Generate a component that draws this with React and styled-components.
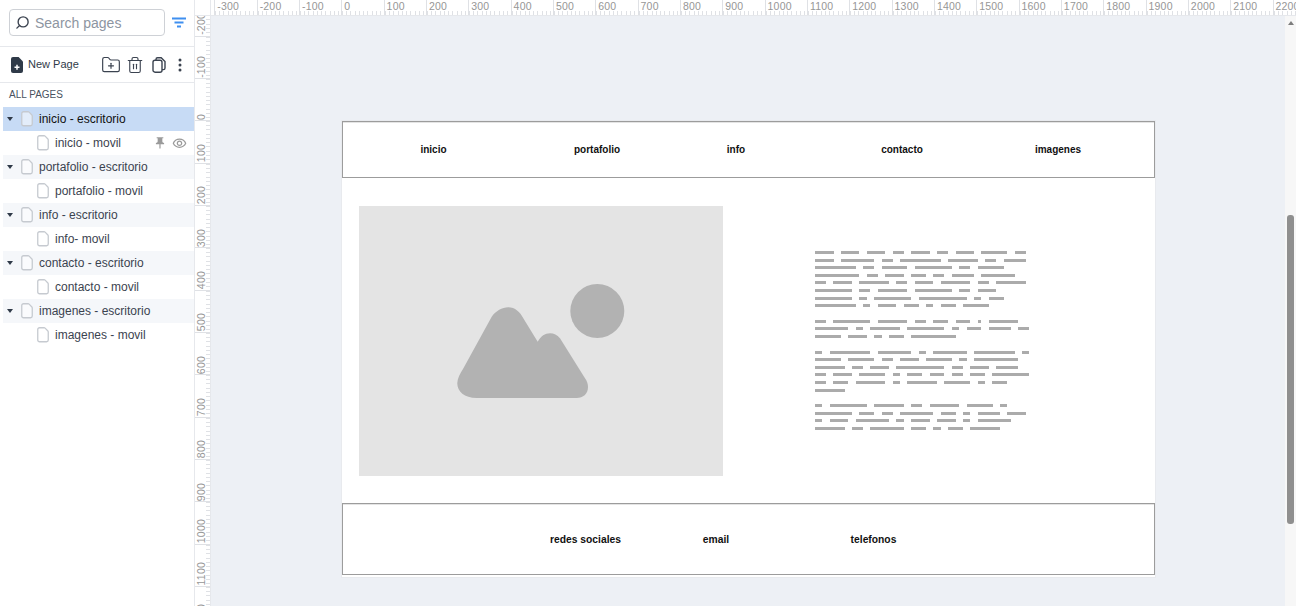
import React from "react";
import styled, { createGlobalStyle } from "styled-components";
import { Search, FolderPlus, Trash2 } from "lucide-react";
import { MdPushPin, MdOutlineVisibility } from "react-icons/md";

const GlobalStyle = createGlobalStyle`
    html, body {
        margin: 0;
        height: 606px;
        overflow: hidden;
        background: #fff;
        font-family: "Liberation Sans", Arial, sans-serif;
    }
    * { box-sizing: border-box; }
`;

const pages = [
    { name: "inicio - escritorio", child: "inicio - movil", selected: true },
    { name: "portafolio - escritorio", child: "portafolio - movil" },
    { name: "info - escritorio", child: "info- movil" },
    { name: "contacto - escritorio", child: "contacto - movil" },
    { name: "imagenes - escritorio", child: "imagenes - movil" },
];

const hLabels = [];
for (let i = -300; i <= 2200; i += 100) hLabels.push(i);
const vLabels = [];
for (let i = -200; i <= 1200; i += 100) vLabels.push(i);

/* largo de cada palabra del texto simulado */
const paragraphs = [
    [
        [5, 5, 5, 3, 5, 3, 5, 7, 3],
        [5, 9, 3, 11, 8, 3, 6],
        [11, 3, 7, 10, 3, 7],
        [12, 3, 5, 4, 3, 6, 9],
        [3, 5, 8, 3, 5, 8, 3, 8],
        [10, 3, 8, 10, 3, 5],
        [10, 2, 10, 13, 2, 4],
        [11, 2, 5, 4, 2, 4, 7],
    ],
    [
        [3, 10, 8, 3, 4, 4, 1, 8],
        [9, 2, 8, 10, 2, 4, 6, 3],
        [7, 5, 2, 4, 12],
    ],
    [
        [2, 11, 9, 2, 9, 11, 2],
        [7, 7, 3, 5, 7, 2, 12],
        [8, 3, 5, 13, 3, 5, 6],
        [3, 5, 7, 2, 4, 4, 3, 4, 10],
        [3, 4, 8, 2, 8, 7, 2, 4],
        [8],
    ],
    [
        [2, 10, 8, 3, 8, 7, 2],
        [10, 4, 3, 9, 4, 2, 6, 5],
        [2, 5, 9, 2, 5, 5, 2, 9],
        [8, 3, 9, 4, 2, 4, 8],
    ],
];

const navLinks = ["inicio", "portafolio", "info", "contacto", "imagenes"];
const footerLinks = ["redes sociales", "email", "telefonos"];

const PageIcon = () => (
    <svg width="12" height="16" viewBox="0 0 12 16" fill="none">
        <path
            d="M2.5 .75h4.6c.4 0 .7.1 1 .4l2.8 2.9c.3.3.35.6.35 1v8c0 1-.7 1.7-1.7 1.7H2.5c-1 0-1.75-.7-1.75-1.7V2.5C.75 1.5 1.5.75 2.5.75z"
            fill="#fff"
            fillOpacity=".5"
            stroke="#c6cad0"
            strokeWidth="1.3"
        />
    </svg>
);

const NewPageIcon = () => (
    <svg width="12" height="16" viewBox="0 0 12 16">
        <path
            d="M2 0h5.6L12 4.4V14a2 2 0 0 1-2 2H2a2 2 0 0 1-2-2V2a2 2 0 0 1 2-2z"
            fill="#2f3a48"
        />
        <path d="M6 7.7v5M3.5 10.2h5" stroke="#fff" strokeWidth="1.5" />
    </svg>
);

const CopyIcon = () => (
    <svg width="14" height="16" viewBox="0 0 14 16" fill="none" stroke="#3b4350" strokeWidth="1.4">
        <path d="M4 3V2.4C4 1.400 4.600.800 5.500.800h3.700l3.800 3.800v6.400c0 1-.6 1.600-1.500 1.600H10" />
        <rect x="1" y="3.300" width="9" height="11.900" rx="2" />
    </svg>
);

const KebabIcon = () => (
    <svg width="4" height="14" viewBox="0 0 4 14" fill="#3b4350">
        <circle cx="2" cy="2" r="1.500" />
        <circle cx="2" cy="7" r="1.500" />
        <circle cx="2" cy="12" r="1.500" />
    </svg>
);

const FilterIcon = () => (
    <svg width="14" height="11" viewBox="0 0 14 11" fill="none" stroke="#3f8ff0" strokeWidth="2">
        <path d="M0 1.500h14M2.500 5.500h9M5 9.500h4" />
    </svg>
);

const PlaceholderArt = () => (
    <svg width="168" height="114" viewBox="0 0 168 114" fill="#b2b2b2">
        <circle cx="140.300" cy="27" r="27" />
        <path d="M19.700 114C7 114 0 107 .3 99C.5 94 3 90 6 85L34.700 32.700C39 27 45 23.300 51.300 23.300C58 23.300 63 28 66.300 34.300L80.700 57.700C84 52 88 49.300 93 49.300C97 49.300 100 51 103 54.300L128 94.300C130 97 131 100 131 103C131 110 126 114 119.700 114Z" />
    </svg>
);

const App = () => {
    return (
        <Layout>
            <GlobalStyle />
            <Sidebar>
                <SearchRow>
                    <SearchBox>
                        <SearchGlyph size={15} strokeWidth={2.2} />
                        <span>Search pages</span>
                    </SearchBox>
                    <FilterIcon />
                </SearchRow>
                <ActionRow>
                    <NewPage>
                        <NewPageIcon />
                        <NewPageLabel>New Page</NewPageLabel>
                    </NewPage>
                    <Actions>
                        <ActionSlot>
                            <FolderPlus size={20} strokeWidth={1.4} color="#3b4350" />
                        </ActionSlot>
                        <ActionSlot>
                            <Trash2 size={18} strokeWidth={1.5} color="#3b4350" />
                        </ActionSlot>
                        <ActionSlot>
                            <CopyIcon />
                        </ActionSlot>
                        <ActionSlot $narrow>
                            <KebabIcon />
                        </ActionSlot>
                    </Actions>
                </ActionRow>
                <SectionTitle>ALL PAGES</SectionTitle>
                {pages.map((page) => (
                    <React.Fragment key={page.name}>
                        <ParentRow $selected={page.selected}>
                            <Caret />
                            <PageIcon />
                            <RowName $dark={page.selected}>{page.name}</RowName>
                        </ParentRow>
                        <ChildRow>
                            <PageIcon />
                            <RowName>{page.child}</RowName>
                            {page.selected && (
                                <RowTools>
                                    <MdPushPin size={14} color="#9a9a9a" />
                                    <MdOutlineVisibility size={15} color="#9a9a9a" />
                                </RowTools>
                            )}
                        </ChildRow>
                    </React.Fragment>
                ))}
            </Sidebar>
            <Workspace>
                <TopRuler>
                    <RulerCorner />
                    <HorizontalScale>
                        {hLabels.map((n) => (
                            <HCell key={n}>{n}</HCell>
                        ))}
                    </HorizontalScale>
                </TopRuler>
                <WorkspaceBody>
                    <LeftRuler>
                        {vLabels.map((n) => (
                            <VCell key={n}>
                                <span>{n}</span>
                            </VCell>
                        ))}
                    </LeftRuler>
                    <Canvas>
                        <Page>
                            <NavBar>
                                {navLinks.map((l) => (
                                    <NavLink key={l}>{l}</NavLink>
                                ))}
                            </NavBar>
                            <Content>
                                <Placeholder>
                                    <PlaceholderArt />
                                </Placeholder>
                                <TextBlock>
                                    {paragraphs.map((lines, i) => (
                                        <Paragraph key={i}>
                                            {lines.map((words, j) => (
                                                <TextLine key={j}>
                                                    {words.map((w, k) => (
                                                        <Word key={k} $chars={w} />
                                                    ))}
                                                </TextLine>
                                            ))}
                                        </Paragraph>
                                    ))}
                                </TextBlock>
                            </Content>
                            <FooterBar>
                                {footerLinks.map((l) => (
                                    <BarLink key={l}>{l}</BarLink>
                                ))}
                            </FooterBar>
                        </Page>
                    </Canvas>
                    <ScrollTrack>
                        <ScrollArrow />
                        <ScrollThumb />
                    </ScrollTrack>
                </WorkspaceBody>
            </Workspace>
        </Layout>
    );
};

const Layout = styled.div`
    display: flex;
    width: 1296px;
    height: 606px;
    overflow: hidden;
`;

/* Sidebar */
const Sidebar = styled.aside`
    flex: 0 0 195px;
    border-right: 1px solid #e6e8ec;
    background: #fff;
`;

const SearchRow = styled.div`
    display: flex;
    align-items: center;
    gap: 7px;
    height: 47px;
    padding: 0 0 1px 9px;
    border-bottom: 1px solid #e6e8ec;
`;

const SearchBox = styled.div`
    display: flex;
    align-items: center;
    gap: 5px;
    width: 156px;
    height: 27px;
    padding-left: 5px;
    border: 1px solid #ced1d6;
    border-radius: 4px;
    color: #8d95a1;
    font-size: 14px;
`;

const SearchGlyph = styled(Search)`
    transform: scaleX(-1);
    color: #3b4350;
`;

const ActionRow = styled.div`
    display: flex;
    align-items: center;
    justify-content: space-between;
    height: 36px;
    padding: 0 5px 0 11px;
    border-bottom: 1px solid #e6e8ec;
`;

const NewPage = styled.div`
    display: flex;
    align-items: center;
    gap: 5px;
    color: #2f3a48;
    font-size: 11px;
`;

const NewPageLabel = styled.span`
    margin-top: -2px;
`;

const Actions = styled.div`
    display: flex;
    align-items: center;
`;

const ActionSlot = styled.div`
    display: flex;
    align-items: center;
    justify-content: center;
    width: ${(p) => (p.$narrow ? "18px" : "24px")};
`;

const SectionTitle = styled.div`
    height: 24px;
    padding: 6px 0 0 9px;
    color: #4a5260;
    font-size: 10px;
    line-height: 12px;
`;

const ParentRow = styled.div`
    display: flex;
    align-items: center;
    height: 24px;
    margin-left: 3px;
    padding-left: 4px;
    background: ${(p) => (p.$selected ? "#c7dbf5" : "#f5f7fa")};
    svg { margin-left: 8px; }
`;

const Caret = styled.span`
    width: 0;
    height: 0;
    border-left: 3.500px solid transparent;
    border-right: 3.500px solid transparent;
    border-top: 4px solid #2f3a48;
`;

const ChildRow = styled.div`
    display: flex;
    align-items: center;
    height: 24px;
    padding-left: 37px;
`;

const RowName = styled.span`
    margin-left: 6px;
    color: ${(p) => (p.$dark ? "#111" : "#3b4350")};
    font-size: 12px;
    white-space: nowrap;
`;

const RowTools = styled.div`
    display: flex;
    align-items: center;
    gap: 5px;
    margin-left: auto;
    padding-right: 7px;
`;

/* Reglas */
const Workspace = styled.div`
    flex: 1;
    display: flex;
    flex-direction: column;
    min-width: 0;
`;

const TopRuler = styled.div`
    display: flex;
    flex: 0 0 16px;
    border-bottom: 1px solid #e6e8ec;
    overflow: hidden;
`;

const RulerCorner = styled.div`
    flex: 0 0 16px;
    border-right: 1px solid #e6e8ec;
`;

const HorizontalScale = styled.div`
    display: flex;
    padding-left: 3.300px;
`;

const HCell = styled.div`
    flex: 0 0 42.33px;
    height: 15px;
    padding-left: 2px;
    border-left: 1px solid #dfe1e5;
    background: repeating-linear-gradient(to right, #dfe1e5 0 1px, transparent 1px 4.233px) left bottom / 100% 4px no-repeat;
    color: #969696;
    font-size: 10.500px;
    line-height: 12px;
    letter-spacing: .2px;
`;

const WorkspaceBody = styled.div`
    flex: 1;
    display: flex;
    min-height: 0;
`;

const LeftRuler = styled.div`
    flex: 0 0 16px;
    border-right: 1px solid #e6e8ec;
    overflow: hidden;
    &::before {
        content: "";
        display: block;
        margin-top: -21.600px;
    }
`;

const VCell = styled.div`
    display: flex;
    justify-content: flex-start;
    align-items: flex-end;
    height: 42.33px;
    padding-bottom: .5px;
    border-bottom: 1px solid #dfe1e5;
    background: repeating-linear-gradient(to bottom, #dfe1e5 0 1px, transparent 1px 4.233px) right top / 4px 100% no-repeat;
    color: #969696;
    font-size: 10.500px;
    line-height: 12px;
    letter-spacing: .2px;
    span {
        writing-mode: vertical-rl;
        transform: rotate(180deg);
    }
`;

/* Lienzo */
const Canvas = styled.main`
    flex: 1;
    padding: 104px 0 0 130px;
    background: #edf0f5;
    overflow: hidden;
`;

const Page = styled.section`
    width: 815px;
    height: 458px;
    border: 1px solid #e8eaee;
    background: #fff;
`;

const NavBar = styled.nav`
    display: grid;
    grid-template-columns: 181px 146px 132px 200px 112px;
    align-items: center;
    height: 57px;
    border: 1px solid #9c9c9c;
    box-shadow: inset 0 1px 0 #e4e4e4;
`;

const FooterBar = styled.footer`
    display: grid;
    grid-template-columns: 187px 74px 241px;
    align-items: center;
    height: 72px;
    padding-left: 149px;
    border: 1px solid #9c9c9c;
    box-shadow: inset 0 1px 0 #e4e4e4;
`;

const BarLink = styled.div`
    color: #111;
    font-size: 10.300px;
    font-weight: 700;
    text-align: center;
`;

const NavLink = styled(BarLink)`
    font-size: 10px;
`;

const Content = styled.div`
    display: flex;
    height: 325px;
    padding: 28px 0 0 17px;
`;

const Placeholder = styled.div`
    display: flex;
    align-items: center;
    justify-content: center;
    flex: 0 0 364px;
    height: 270px;
    background: #e4e4e4;
`;

const TextBlock = styled.div`
    display: flex;
    flex-direction: column;
    gap: 8px;
    margin: 45px 0 0 92px;
`;

const Paragraph = styled.div`
    display: flex;
    flex-direction: column;
`;

const TextLine = styled.div`
    display: flex;
    gap: 7.400px;
    height: 7.600px;
`;

const Word = styled.span`
    width: ${(p) => p.$chars * 3.7}px;
    height: 3px;
    background: #ababab;
`;

/* Barra de desplazamiento */
const ScrollTrack = styled.div`
    display: flex;
    flex-direction: column;
    align-items: center;
    flex: 0 0 11px;
    background: #f7f7f7;
`;

const ScrollArrow = styled.span`
    width: 0;
    height: 0;
    margin-top: 5px;
    border-left: 3.500px solid transparent;
    border-right: 3.500px solid transparent;
    border-bottom: 4px solid #7d7d7d;
`;

const ScrollThumb = styled.div`
    width: 7px;
    height: 309px;
    margin-top: 190px;
    border-radius: 3px;
    background: #8f8f8f;
`;

export default App;
